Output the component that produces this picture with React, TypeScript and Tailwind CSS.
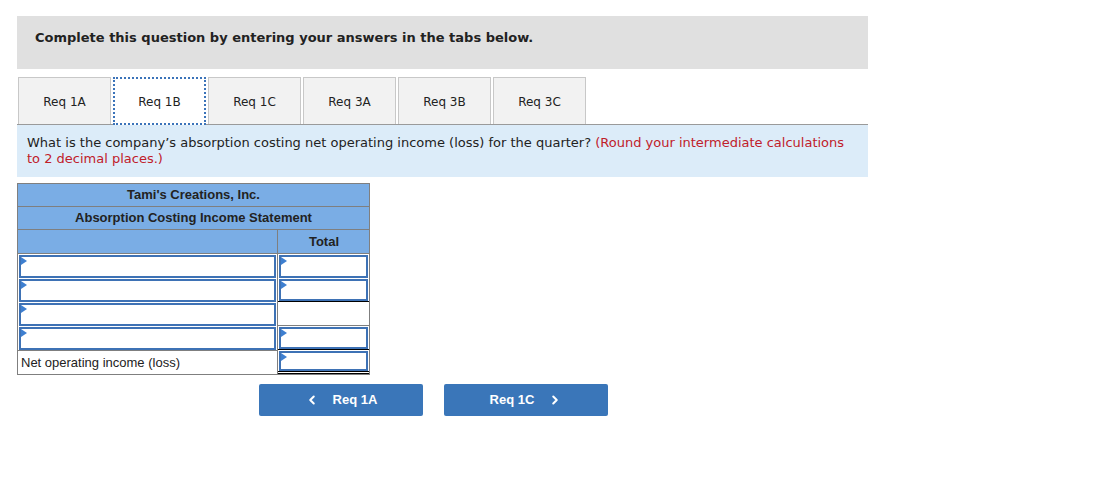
import React from "react";
import { ChevronLeft, ChevronRight } from "lucide-react";

const tabs = ["Req 1A", "Req 1B", "Req 1C", "Req 3A", "Req 3B", "Req 3C"];

function Tri() {
  return (
    <span className="absolute left-0 top-0 w-0 h-0 border-t-[4px] border-b-[4px] border-l-[6px] border-t-transparent border-b-transparent border-l-[#3e7fd0]" />
  );
}

function InputCell({ under }: { under?: "single" | "double" }) {
  const u =
    under === "double"
      ? "border-b-[3px] border-double border-b-black"
      : under === "single"
      ? "border-b border-b-black"
      : "";
  return (
    <div className={`h-full px-px pt-px ${u}`}>
      <div className="relative h-full border-2 border-[#3e72b5] bg-white">
        <Tri />
      </div>
    </div>
  );
}

export default function App() {
  const font = { fontFamily: '"DejaVu Sans", Verdana, sans-serif' };
  return (
    <div className="bg-white w-[1114px] h-[486px] pt-[16px] pl-[17px]">
      <div className="w-[851px]">
        <div
          className="h-[53px] bg-[#e0e0e0] pt-[14px] px-[18px] text-[13px] leading-[16px] font-bold text-[#222]"
          style={font}
        >
          Complete this question by entering your answers in the tabs below.
        </div>
        <div className="mt-[8px] flex gap-[2px] pl-[1px]" style={font}>
          {tabs.map((t, i) => (
            <div
              key={t}
              className={
                i === 1
                  ? "w-[93px] h-[48px] bg-white border-2 border-dotted border-[#3b73b9] flex items-center justify-center text-[12px] text-[#222] relative z-10 pt-[2px]"
                  : "w-[93px] h-[47px] bg-[#f2f2f2] border border-[#c8c8c8] border-b-0 flex items-center justify-center text-[12px] text-[#222] pt-[2px]"
              }
            >
              {t}
            </div>
          ))}
        </div>
        <div
          className="-mt-px border-t border-[#9a9a9a] bg-[#dcecf9] h-[53px] pl-[10px] pr-[14px] pt-[10px] text-[13px] leading-[16px] text-[#222]"
          style={font}
        >
          What is the company’s absorption costing net operating income (loss) for the quarter?{" "}
          <span className="text-[#c0202a]">(Round your intermediate calculations to 2 decimal places.)</span>
        </div>

        <div
          className="mt-[6px] w-[353px] border border-[#7f7f7f] text-[13px] text-[#222]"
          style={{ fontFamily: '"Liberation Sans", Arial, sans-serif' }}
        >
          <div className="h-[23px] bg-[#7aade5] border-b border-[#7f7f7f] flex items-center justify-center font-bold">
            Tami's Creations, Inc.
          </div>
          <div className="h-[23px] bg-[#7aade5] border-b border-[#7f7f7f] flex items-center justify-center font-bold">
            Absorption Costing Income Statement
          </div>
          <div className="grid grid-cols-[260px_1fr]">
            <div className="h-[24px] bg-[#7aade5] border-r border-b border-[#7f7f7f]" />
            <div className="h-[24px] bg-[#7aade5] border-b border-[#7f7f7f] flex items-center justify-end pr-[30px] font-bold">
              Total
            </div>

            <div className="h-[24px] border-r border-[#7f7f7f]"><InputCell /></div>
            <div className="h-[24px]"><InputCell /></div>

            <div className="h-[24px] border-r border-[#7f7f7f]"><InputCell /></div>
            <div className="h-[24px]"><InputCell under="single" /></div>

            <div className="h-[24px] border-r border-[#7f7f7f]"><InputCell /></div>
            <div className="h-[24px] border-b border-[#7f7f7f]" />

            <div className="h-[24px] border-r border-[#7f7f7f]"><InputCell /></div>
            <div className="h-[24px]"><InputCell under="single" /></div>

            <div className="h-[24px] border-r border-t border-[#7f7f7f] flex items-center pl-[3px] text-[13px]">
              Net operating income (loss)
            </div>
            <div className="h-[24px]"><InputCell under="double" /></div>
          </div>
        </div>

        <div
          className="mt-[9px] ml-[242px] flex gap-[21px] text-white font-bold text-[13px]"
          style={{ fontFamily: '"Liberation Sans", Arial, sans-serif' }}
        >
          <div className="w-[164px] h-[32px] bg-[#3a76b9] rounded-[2px] flex items-center justify-center gap-[14px]">
            <ChevronLeft size={14} strokeWidth={3.5} />
            <span>Req 1A</span>
          </div>
          <div className="w-[164px] h-[32px] bg-[#3a76b9] rounded-[2px] flex items-center justify-center gap-[14px]">
            <span>Req 1C</span>
            <ChevronRight size={14} strokeWidth={3.5} />
          </div>
        </div>
      </div>
    </div>
  );
}
